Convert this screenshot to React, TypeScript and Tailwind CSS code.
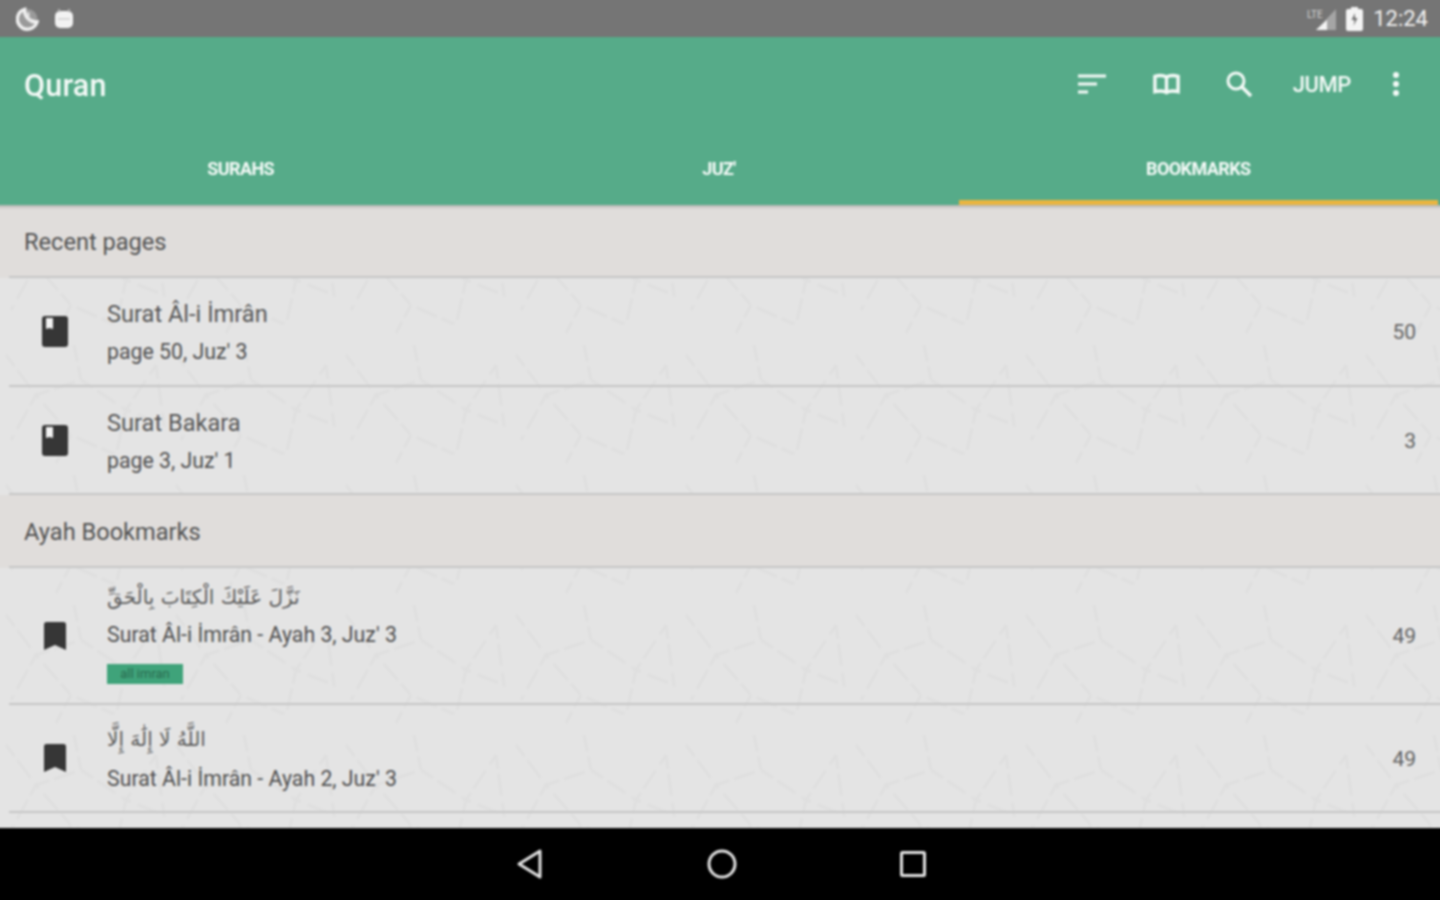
import React from "react";

const Texture = () => (
  <svg className="absolute inset-0 w-full h-full pointer-events-none" aria-hidden="true">
    <defs>
      <pattern id="arabesque" width="170" height="130" patternUnits="userSpaceOnUse">
        <path d="M10 20 L40 60 L15 105 M40 60 L85 45 L130 75 L160 30 M85 45 L78 10 M130 75 L120 120 L75 100 L40 60 M75 100 L60 128 M160 30 L168 90 L130 75" fill="none" stroke="#d8d8d8" strokeWidth="3" strokeDasharray="14 5 22 7" />
      </pattern>
    </defs>
    <rect width="100%" height="100%" fill="url(#arabesque)" opacity="0.4" />
  </svg>
);

const BookIcon = () => (
  <svg className="-ml-[2px]" width="26" height="31" viewBox="0 0 26 31" aria-hidden="true">
    <path d="M3 0H23a3 3 0 0 1 3 3V28a3 3 0 0 1-3 3H3a3 3 0 0 1-3-3V3a3 3 0 0 1 3-3Z" fill="#363636" />
    <path d="M4 2h7v11l-3.500-1-3.500 1Z" fill="#f2f2f2" />
  </svg>
);

const BookmarkIcon = () => (
  <svg width="22" height="28" viewBox="0 0 22 28" aria-hidden="true">
    <path d="M2.500 0H19.500a2.500 2.500 0 0 1 2.500 2.500V28L11 23 0 28V2.500A2.500 2.500 0 0 1 2.500 0Z" fill="#363636" />
  </svg>
);

const Row = ({ h, icon, title, sub, num, arabic, tag, inner }: { h: string; icon: React.ReactNode; title?: string; sub: string; num: string; arabic?: string; tag?: string; inner?: string }) => (
  <div className={`${h} pl-[13px] relative`}>
    <div className="h-full flex items-center pr-7 border-b-2 border-[#c6c6c6]">
      <div className="w-[98px] flex justify-start pl-[35px] shrink-0">{icon}</div>
      <div className={`flex-1 flex flex-col min-w-0 ${inner ?? ""}`}>
        {arabic ? (
          <div dir="rtl" className="self-start text-[#5c5c5c] text-[20px] leading-[30px] font-['DejaVu_Sans',sans-serif]">{arabic}</div>
        ) : (
          <div className="text-[#575757] text-[23.6px] leading-[30px]">{title}</div>
        )}
        <div className="text-[#505050] text-[21.3px] leading-[30px] mt-[8px]">{sub}</div>
        {tag && (
          <div className="mt-[14px] w-[76px] h-[20px] bg-[#3fa37a] text-[#2a6b50] text-[13px] leading-[20px] text-center">{tag}</div>
        )}
      </div>
      <div className="text-[#626262] text-[21px] leading-none mt-[2px]">{num}</div>
    </div>
  </div>
);

const Section = ({ label, h }: { label: string; h: string }) => (
  <div className={`${h} bg-[#e0dddb] pl-[13px] relative`}>
    <div className="h-full border-b-2 border-[#c6c6c6] flex items-center pl-[15px] text-[#525252] text-[23.6px] pt-[4px]">{label}</div>
  </div>
);

export default function App() {
  return (
    <div className="w-[1440px] h-[900px] overflow-hidden">
      <div className="w-[1448px] h-[908px] -ml-[4px] -mt-[4px] flex flex-col bg-[#e4e4e4] font-['Roboto',sans-serif] blur-[0.85px]">
        <div className="h-[41px] pt-[4px] bg-[#757575] flex items-center justify-between pl-[20px] pr-[16px] shrink-0">
          <div className="flex items-center gap-[15px]">
            <svg width="23" height="24" viewBox="0 0 24 24" aria-hidden="true">
              <circle cx="12" cy="12" r="10.500" fill="#9a9a9a" />
              <path d="M9 2a10.500 10.500 0 1 0 13 13A12 12 0 0 1 9 2Z" fill="none" stroke="#f0f0f0" strokeWidth="3.500" />
              <path d="M13 5v6l4 5" fill="none" stroke="#e6e6e6" strokeWidth="2" />
            </svg>
            <svg width="20" height="22" viewBox="0 0 20 22" aria-hidden="true">
              <rect x="1" y="3" width="18" height="17" rx="5" fill="#f2f2f2" />
              <path d="M5 1v3M15 1v3" stroke="#b0b0b0" strokeWidth="2" />
              <path d="M4 11h12" stroke="#bdbdbd" strokeWidth="1" />
            </svg>
          </div>
          <div className="flex items-center">
            <svg width="30" height="24" viewBox="0 0 30 24" aria-hidden="true">
              <path d="M29 2V23H9Z" fill="#a5a5a5" />
              <path d="M20 13V23H9Z" fill="#f4f4f4" />
              <text x="0" y="11" fontSize="10" fill="#d6d6d6" fontFamily="Roboto">LTE</text>
            </svg>
            <svg className="ml-[9px]" width="17" height="24" viewBox="0 0 17 24" aria-hidden="true">
              <path d="M5 0h7v2h3a2 2 0 0 1 2 2v18a2 2 0 0 1-2 2H2a2 2 0 0 1-2-2V4a2 2 0 0 1 2-2h3Z" fill="#f4f4f4" />
              <path d="M9 6 5.500 13h3l-1 6 4-8H9Z" fill="#6f6f6f" />
            </svg>
            <span className="ml-[10px] text-[#f2f2f2] text-[22px] leading-none">12:24</span>
          </div>
        </div>

        <div className="relative z-10 h-[168px] bg-[#56ab89] flex flex-col shrink-0 shadow-[0_2px_3px_rgba(0,0,0,0.2)]">
          <div className="h-[95px] flex items-start pt-[30px] pl-[28px] pr-[44px] justify-between text-[#f4faf7]">
            <span className="text-[30.5px] leading-[38px] font-medium tracking-[0.2px]">Quran</span>
            <div className="flex items-center h-[34px]">
              <svg width="28" height="22" viewBox="0 0 28 22" aria-hidden="true">
                <path d="M0 3h28M0 11h19M0 19h10" stroke="#f4faf7" strokeWidth="3" />
              </svg>
              <svg className="ml-[47px]" width="27" height="22" viewBox="0 0 28 22" aria-hidden="true">
                <path d="M14 4C11 2 6 2 2 3v16c4-1 9-1 12 1 3-2 8-2 12-1V3c-4-1-9-1-12 1Zm0 0v16" fill="none" stroke="#f4faf7" strokeWidth="3.500" />
              </svg>
              <svg className="ml-[45px]" width="28" height="28" viewBox="0 0 28 28" aria-hidden="true">
                <circle cx="11" cy="11" r="8" fill="none" stroke="#f4faf7" strokeWidth="3" />
                <path d="M17 17l9 9" stroke="#f4faf7" strokeWidth="3.500" />
              </svg>
              <span className="ml-[40px] text-[22px] font-medium tracking-[-0.4px]">JUMP</span>
              <svg className="ml-[41px]" width="8" height="26" viewBox="0 0 8 26" aria-hidden="true">
                <circle cx="4" cy="4" r="3" fill="#f4faf7" />
                <circle cx="4" cy="13" r="3" fill="#f4faf7" />
                <circle cx="4" cy="22" r="3" fill="#f4faf7" />
              </svg>
            </div>
          </div>
          <div className="flex-1 grid grid-cols-3 pl-[4px] pr-[6px] text-[#f4faf7] text-[18px] font-bold tracking-[-0.6px]">
            <div className="flex justify-center items-start pt-[23px] pl-[2px]">SURAHS</div>
            <div className="flex justify-center items-start pt-[23px]">JUZ'</div>
            <div className="flex justify-center items-start pt-[23px] border-b-[5px] border-[#e9b540]">BOOKMARKS</div>
          </div>
        </div>

        <div className="h-[623px] relative flex flex-col shrink-0">
          <Texture />
          <Section label="Recent pages" h="h-[73px]" />
          <Row h="h-[109px]" icon={<BookIcon />} title="Surat Âl-i İmrân" sub="page 50, Juz' 3" num="50" inner="pt-[3px]" />
          <Row h="h-[108px]" icon={<BookIcon />} title="Surat Bakara" sub="page 3, Juz' 1" num="3" inner="pt-[3px]" />
          <Section label="Ayah Bookmarks" h="h-[73px]" />
          <Row h="h-[137px]" icon={<BookmarkIcon />} arabic="نَزَّلَ عَلَيْكَ الْكِتَابَ بِالْحَقِّ" sub="Surat Âl-i İmrân - Ayah 3, Juz' 3" num="49" tag="all imran" inner="pb-[5px]" />
          <Row h="h-[108px]" icon={<BookmarkIcon />} arabic="اللَّهُ لَا إِلَٰهَ إِلَّا" sub="Surat Âl-i İmrân - Ayah 2, Juz' 3" num="49" inner="pt-[3px] [&>div:first-child]:-translate-y-[2px]" />
        </div>

        <div className="flex-1 bg-black flex items-center pb-[4px]">
          <div className="w-full flex items-center justify-center gap-[163px] pl-[2px]">
            <svg width="28" height="32" viewBox="0 0 28 32" aria-hidden="true">
              <path d="M24 3V29L3 16Z" fill="none" stroke="#e4e4e4" strokeWidth="3" strokeLinejoin="round" />
            </svg>
            <svg width="30" height="30" viewBox="0 0 30 30" aria-hidden="true">
              <circle cx="15" cy="15" r="13" fill="none" stroke="#e4e4e4" strokeWidth="3" />
            </svg>
            <svg width="26" height="26" viewBox="0 0 26 26" aria-hidden="true">
              <rect x="1.500" y="1.500" width="23" height="23" rx="1" fill="none" stroke="#e4e4e4" strokeWidth="3" />
            </svg>
          </div>
        </div>
      </div>
    </div>
  );
}
